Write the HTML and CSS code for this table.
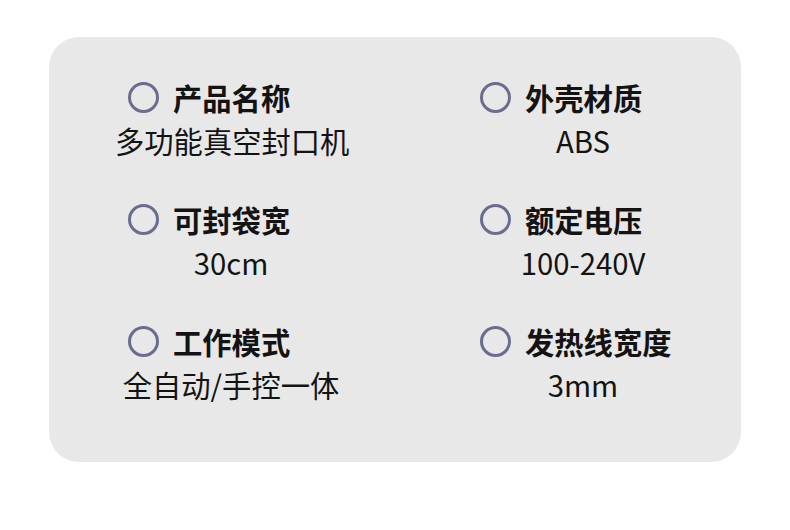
FILE: index.html
```html
<!DOCTYPE html>
<html lang="zh-CN">
<head>
<meta charset="utf-8">
<title>产品参数</title>
<link rel="stylesheet" href="styles.css">
</head>
<body>
<div class="card">
  <div class="grid">
    <div class="cell">
      <div class="label"><span class="dot"></span><span class="name">产品名称</span></div>
      <div class="value">多功能真空封口机</div>
    </div>
    <div class="cell">
      <div class="label"><span class="dot"></span><span class="name">外壳材质</span></div>
      <div class="value">ABS</div>
    </div>
    <div class="cell">
      <div class="label"><span class="dot"></span><span class="name">可封袋宽</span></div>
      <div class="value">30cm</div>
    </div>
    <div class="cell">
      <div class="label"><span class="dot"></span><span class="name">额定电压</span></div>
      <div class="value">100-240V</div>
    </div>
    <div class="cell">
      <div class="label"><span class="dot"></span><span class="name">工作模式</span></div>
      <div class="value">全自动/手控一体</div>
    </div>
    <div class="cell">
      <div class="label"><span class="dot"></span><span class="name">发热线宽度</span></div>
      <div class="value">3mm</div>
    </div>
  </div>
</div>
</body>
</html>
```
FILE: styles.css
```css
html, body {
  margin: 0;
  padding: 0;
  background: #ffffff;
}
body {
  width: 790px;
  height: 530px;
  font-family: "Noto Sans CJK SC", "Noto Sans", sans-serif;
  color: #131313;
  padding-top: 37px;
  padding-left: 49px;
  box-sizing: border-box;
}
.card {
  width: 692px;
  height: 425px;
  background: #e8e8e8;
  border-radius: 30px;
  box-sizing: border-box;
  padding: 40px 41px 0 66px;
}
.grid {
  display: grid;
  grid-template-columns: 232px 232px;
  column-gap: 120px;
  row-gap: 36px;
}
.cell {
  display: flex;
  flex-direction: column;
}
.label {
  display: flex;
  align-items: center;
  height: 40px;
  padding-left: 13px;
  gap: 14px;
}
.dot {
  width: 31px;
  height: 31px;
  border: 3px solid #6b6d8e;
  border-radius: 50%;
  box-sizing: border-box;
  flex: none;
}
.name {
  font-size: 29.3px;
  font-weight: 700;
  line-height: 40px;
  white-space: nowrap;
}
.value {
  font-size: 29.3px;
  line-height: 46px;
  text-align: center;
  white-space: nowrap;
}
```
